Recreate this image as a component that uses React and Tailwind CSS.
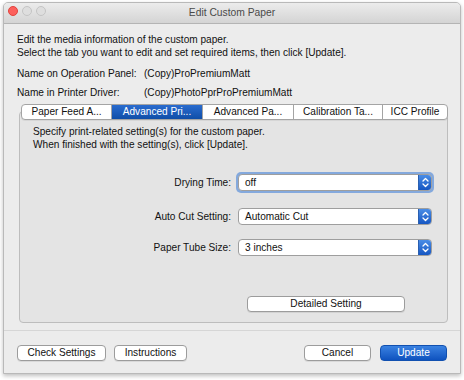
import React from "react";

const font = { fontFamily: '"Liberation Sans", Arial, sans-serif' };

function Chevrons() {
  return (
    <svg width="7" height="11" viewBox="0 0 7 11" fill="none" stroke="white" strokeWidth="1.3" strokeLinecap="round" strokeLinejoin="round">
      <path d="M1 4 L3.5 1.5 L6 4" />
      <path d="M1 7 L3.5 9.5 L6 7" />
    </svg>
  );
}

function Select({ value, focused }) {
  return (
    <div className={focused ? "rounded-[5px] p-[2px] bg-[#84a9dd] -m-[2px]" : ""}>
      <div className="flex h-[17px] w-[194px] items-stretch rounded-[4px] border border-[#9e9e9e] bg-white overflow-hidden">
        <div className="flex-1 pl-[6px] text-[10.1px] leading-[15px] text-[#111]">{value}</div>
        <div className="flex w-[13px] items-center justify-center bg-gradient-to-b from-[#4a8de6] to-[#1556c2] border-l border-[#2a5fb0]">
          <Chevrons />
        </div>
      </div>
    </div>
  );
}

function Button({ children, className = "" }) {
  return (
    <div className={"flex h-[16px] items-center justify-center rounded-[4px] border border-[#9c9c9c] bg-white text-[10.1px] text-[#111] shadow-[0_1px_0_rgba(0,0,0,0.08)] " + className}>
      {children}
    </div>
  );
}

function Row({ label, value, focused, className = "" }) {
  return (
    <div className={"flex items-center " + className}>
      <div className="w-[218px] pr-[7px] text-right text-[10.1px] text-[#111]">{label}</div>
      <Select value={value} focused={focused} />
    </div>
  );
}

export default function App() {
  const tabs = [
    { t: "Paper Feed A...", w: 89 },
    { t: "Advanced Pri...", w: 91, sel: true },
    { t: "Advanced Pa...", w: 91 },
    { t: "Calibration Ta...", w: 89 },
    { t: "ICC Profile", w: 65 },
  ];
  return (
    <div className="h-[380px] w-[464px] bg-white pl-[3px] pt-[2px]" style={font}>
      <div className="flex h-[372px] w-[458px] flex-col overflow-hidden rounded-t-[5px] border border-[#b9b9b9] bg-[#ececec] shadow-[0_2px_4px_rgba(0,0,0,0.25)]">
        {/* Title bar */}
        <div className="relative flex h-[21px] shrink-0 items-center border-b border-[#b4b4b4] bg-gradient-to-b from-[#ececec] to-[#d4d4d4]">
          <div className="absolute left-[4px] top-[3px] flex gap-[4px]">
            <div className="h-[10px] w-[10px] rounded-full border border-[#e0443e] bg-[#fc605c]" />
            <div className="h-[10px] w-[10px] rounded-full border border-[#c4c4c4] bg-[#dedede]" />
            <div className="h-[10px] w-[10px] rounded-full border border-[#c4c4c4] bg-[#dedede]" />
          </div>
          <div className="w-full text-center text-[10.3px] text-[#4a4a4a]">Edit Custom Paper</div>
        </div>

        {/* Body */}
        <div className="flex flex-col px-[13px] pt-[9px] text-[10.1px] text-[#111]">
          <div className="leading-[13px]">Edit the media information of the custom paper.</div>
          <div className="leading-[13px]">Select the tab you want to edit and set required items, then click [Update].</div>

          <div className="mt-[8px] flex leading-[13px]">
            <div className="w-[127px]">Name on Operation Panel:</div>
            <div>(Copy)ProPremiumMatt</div>
          </div>
          <div className="mt-[6px] flex leading-[13px]">
            <div className="w-[127px]">Name in Printer Driver:</div>
            <div>(Copy)PhotoPprProPremiumMatt</div>
          </div>

          {/* Tab panel */}
          <div className="relative mt-[12px] ml-[2px] h-[212px] w-[429px] rounded-[4px] border border-[#bdbdbd] bg-[#e4e4e4]">
            <div className="absolute -top-[8px] left-[1px] flex h-[16px] overflow-hidden rounded-[4px] border border-[#a4a4a4] bg-white shadow-[0_1px_0_rgba(0,0,0,0.06)]">
              {tabs.map((tab, i) => (
                <div
                  key={tab.t}
                  style={{ width: tab.w }}
                  className={
                    "flex items-center justify-center text-[10.1px] leading-[14px] " +
                    (i > 0 ? "border-l border-[#a4a4a4] " : "") +
                    (tab.sel ? "bg-gradient-to-b from-[#2a6ccf] to-[#0f4ea8] text-white" : "text-[#111]")
                  }
                >
                  {tab.t}
                </div>
              ))}
            </div>

            <div className="pl-[13px] pt-[13px] leading-[13px]">
              <div>Specify print-related setting(s) for the custom paper.</div>
              <div>When finished with the setting(s), click [Update].</div>
            </div>

            <Row className="mt-[23px]" label="Drying Time:" value="off" focused />
            <Row className="mt-[17px]" label="Auto Cut Setting:" value="Automatic Cut" />
            <Row className="mt-[14px]" label="Paper Tube Size:" value="3 inches" />

            <div className="mt-[40px] pl-[227px]">
              <Button className="w-[158px]">Detailed Setting</Button>
            </div>
          </div>
        </div>

        <div className="mt-[7px] h-px shrink-0 bg-[#d6d6d6]" />

        <div className="flex items-center px-[13px] pt-[14px]">
          <Button className="w-[89px]">Check Settings</Button>
          <Button className="ml-[8px] w-[73px]">Instructions</Button>
          <div className="flex-1" />
          <Button className="w-[67px]">Cancel</Button>
          <div className="ml-[9px] flex h-[16px] w-[67px] items-center justify-center rounded-[4px] border border-[#1150b0] bg-gradient-to-b from-[#3a82e2] to-[#0e52bf] text-[10.1px] text-white">
            Update
          </div>
        </div>
      </div>
    </div>
  );
}
